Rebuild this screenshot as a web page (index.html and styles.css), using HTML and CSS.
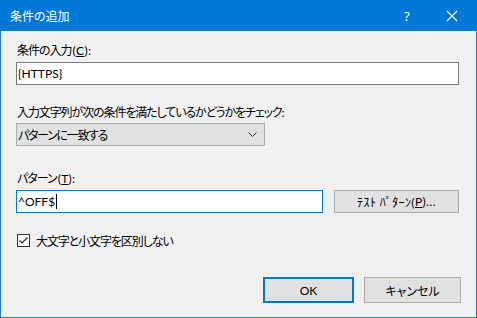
FILE: index.html
```html
<!DOCTYPE html>
<html lang="ja">
<head>
<meta charset="utf-8">
<title>条件の追加</title>
<link rel="stylesheet" href="styles.css">
</head>
<body>
<div class="window">
  <div class="titlebar">
    <span class="title">条件の追加</span>
    <span class="tb-help">?</span>
    <span class="tb-close">
      <svg width="12" height="12" viewBox="0 0 12 12"><path d="M1 1 L11 11 M11 1 L1 11" stroke="#fff" stroke-width="1.1" fill="none"/></svg>
    </span>
  </div>
  <div class="content">
    <div class="label l1">条件の入力<span class="mn">(<u>C</u>):</span></div>
    <div class="textbox wide">{HTTPS}</div>

    <div class="label l2">入力文字列が次の条件を満たしているかどうかをチェック:</div>
    <div class="combo">
      <span class="combo-text">パターンに一致する</span>
      <svg class="chev" width="9" height="5" viewBox="0 0 9 5"><path d="M0.5 0.5 L4.5 4.5 L8.5 0.5" stroke="#333" stroke-width="1" fill="none"/></svg>
    </div>

    <div class="label l3">パターン<span class="mn">(<u>T</u>):</span></div>
    <div class="row">
      <div class="textbox focus">^OFF$<span class="caret"></span></div>
      <div class="btn testbtn">ﾃｽﾄ ﾊﾟﾀｰﾝ(<u>P</u>)...</div>
    </div>

    <div class="check-row">
      <span class="checkbox">
        <svg width="11" height="11" viewBox="0 0 11 11"><path d="M1.5 5.5 L4 8 L9.5 2.5" stroke="#222" stroke-width="1.2" fill="none"/></svg>
      </span>
      <span class="check-label">大文字と小文字を区別しない</span>
    </div>

    <div class="buttons">
      <div class="btn ok">OK</div>
      <div class="btn cancel">キャンセル</div>
    </div>
  </div>
</div>
</body>
</html>
```
FILE: styles.css
```css
html, body {
  margin: 0;
  padding: 0;
  background: #f0f0f0;
}
body {
  font-family: Lato, "Noto Sans CJK JP", sans-serif;
  font-size: 12px;
  font-feature-settings: "palt" 1;
  color: #000;
}
.window {
  width: 477px;
  height: 318px;
  box-sizing: border-box;
  border: 1px solid #1c7bd0;
  border-top: none;
  background: #f0f0f0;
  display: flex;
  flex-direction: column;
}
.titlebar {
  height: 31px;
  margin: 0 -1px;
  background: #0078d7;
  color: #fff;
  display: flex;
  align-items: center;
  padding-left: 10px;
  font-size: 12px;
}
.title {
  flex: 1;
}
.tb-help {
  width: 14px;
  font-family: "Noto Sans", sans-serif;
  font-size: 13px;
  margin-right: 28px;
}
.tb-close {
  display: flex;
  width: 12px;
  margin-right: 19px;
}
.content {
  padding: 0 15px;
  display: flex;
  flex-direction: column;
  align-items: flex-start;
}
.label {
  height: 16px;
  line-height: 16px;
  white-space: nowrap;
  letter-spacing: -1px;
}
.mn {
  letter-spacing: 0.3px;
  margin-left: 1px;
}
.l1 { margin-top: 12px; margin-bottom: 3px; padding-left: 1px; }
.l2 { margin-top: 20px; margin-bottom: 2px; padding-left: 1px; letter-spacing: -1.1px; }
.l3 { margin-top: 25px; margin-bottom: 3px; padding-left: 1px; }
.textbox {
  box-sizing: border-box;
  height: 23px;
  background: #fff;
  border: 1px solid #7a7a7a;
  padding: 0 1px;
  line-height: 21px;
  display: flex;
  align-items: center;
}
.wide { width: 443px; }
.focus {
  width: 307px;
  border-color: #0078d7;
}
.caret {
  display: inline-block;
  width: 1px;
  height: 15px;
  background: #000;
  margin-left: 1px;
}
.combo {
  box-sizing: border-box;
  width: 249px;
  height: 23px;
  background: #e1e1e1;
  border: 1px solid #adadad;
  display: flex;
  align-items: center;
  justify-content: space-between;
  padding: 0 7px 0 1px;
}
.combo-text {
  letter-spacing: -1.3px;
}
.row {
  display: flex;
  gap: 11px;
}
.btn {
  box-sizing: border-box;
  background: #e1e1e1;
  border: 1px solid #adadad;
  display: flex;
  align-items: center;
  justify-content: center;
  white-space: nowrap;
}
.testbtn {
  width: 125px;
  height: 23px;
  letter-spacing: 0.4px;
}
.check-row {
  margin-top: 20px;
  display: flex;
  align-items: center;
  height: 14px;
}
.checkbox {
  box-sizing: border-box;
  width: 13px;
  height: 13px;
  border: 1px solid #333;
  background: #fff;
  display: flex;
  align-items: center;
  justify-content: center;
  margin-left: 1px;
}
.check-label {
  margin-left: 6px;
  letter-spacing: -1.1px;
}
.buttons {
  align-self: flex-end;
  margin-top: 30px;
  display: flex;
  gap: 10px;
}
.ok {
  width: 91px;
  height: 26px;
  border: 2px solid #0078d7;
}
.cancel {
  width: 97px;
  height: 26px;
}
```
